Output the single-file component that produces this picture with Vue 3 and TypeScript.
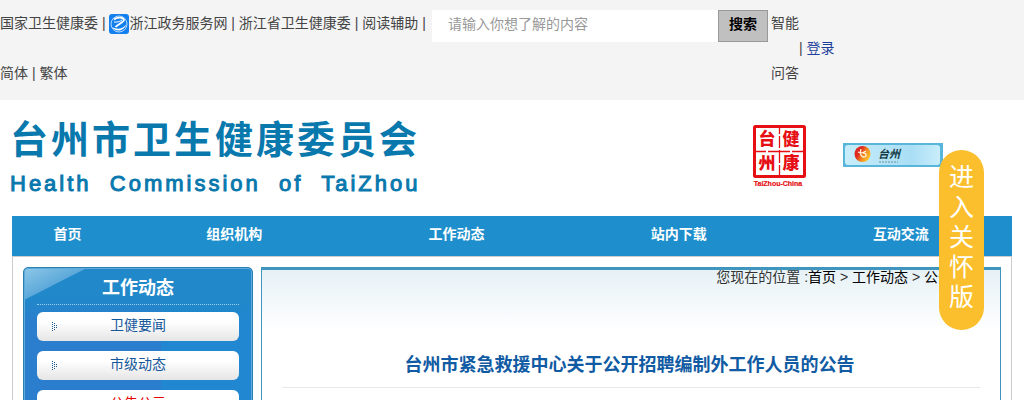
<script setup lang="ts">
import { ref } from 'vue'

interface NavItem {
  label: string
  active?: boolean
}

const keyword = ref('')

const navItems: NavItem[] = [
  { label: '首页' },
  { label: '组织机构' },
  { label: '工作动态' },
  { label: '站内下载' },
  { label: '互动交流' },
]

const sideItems: NavItem[] = [
  { label: '卫健要闻' },
  { label: '市级动态' },
  { label: '公告公示', active: true },
]

const arrowDots: [number, number][] = [
  [0, 0], [0, 2], [0, 4], [0, 6], [0, 8],
  [2, 1], [2, 3], [2, 5], [2, 7],
  [4, 3], [4, 5],
]
</script>

<template>
  <div class="page">
    <div class="topbar">
      <div class="top-links">
        <a href="#">国家卫生健康委</a> | <a href="#"><svg class="zj-icon" viewBox="0 0 20 20" aria-hidden="true">
          <rect width="20" height="20" rx="3" fill="#1480ee" />
          <circle cx="10" cy="10" r="8" fill="none" stroke="#b5d8fb" stroke-width="1" />
          <path d="M5 5.500C8 3 14 3 15 6C15 8 9 10 6.500 13" fill="none" stroke="#fff" stroke-width="1.800" />
          <path d="M3 13C6 18 14 18 17.500 10.500C13.500 15 8 16 3 13Z" fill="#fff" />
          <path d="M5 8C8 8.500 11 7.500 13 6" fill="none" stroke="#fff" stroke-width="1" />
        </svg>浙江政务服务网</a> | <a href="#">浙江省卫生健康委</a> | <a href="#">阅读辅助</a> | <a href="#">简体</a> | <a href="#">繁体</a>
      </div>
      <form class="search" @submit.prevent>
        <input v-model="keyword" type="text" aria-label="搜索内容" placeholder="请输入你想了解的内容">
        <button type="submit">搜索</button>
      </form>
      <a class="qa" href="#">智能问答</a>
      <div class="login">| <a href="#">登录</a></div>
    </div>

    <header class="banner">
      <div class="brand">
        <h1>台州市卫生健康委员会</h1>
        <p>Health&nbsp; Commission&nbsp; of&nbsp; TaiZhou</p>
      </div>
      <svg class="seal" viewBox="0 0 56 66" role="img" aria-label="健康台州">
        <g fill="none" stroke="#e60f14">
          <rect x="2.500" y="2.500" width="50" height="50" rx="1" stroke-width="3" />
          <path d="M27.500 3V10M27.500 12V24M27.500 26V39M27.500 41V52M3 27.500H14M16 27.500H38M40 27.500H52" stroke-width="1.300" />
        </g>
        <g class="seal-glyph">
          <text x="15" y="21">台</text>
          <text x="39" y="21">健</text>
          <text x="15" y="45">州</text>
          <text x="39" y="45">康</text>
        </g>
        <text class="seal-caption" x="26" y="62">TaiZhou-China</text>
      </svg>
      <a class="city" href="#" aria-label="台州">
        <svg viewBox="0 0 100 24" aria-hidden="true">
          <defs>
            <linearGradient id="plate" x1="0" x2="1">
              <stop offset="0" stop-color="#c8edfb" />
              <stop offset="0.700" stop-color="#a9def5" />
              <stop offset="1" stop-color="#c9edfb" />
            </linearGradient>
            <linearGradient id="ball" x1="0" y1="0.200" x2="1" y2="0.800">
              <stop offset="0.300" stop-color="#dd2921" />
              <stop offset="0.600" stop-color="#f58b20" />
              <stop offset="1" stop-color="#ffd12c" />
            </linearGradient>
          </defs>
          <rect width="100" height="24" fill="#57b6da" />
          <rect x="2" y="2" width="95" height="20" rx="3" fill="url(#plate)" />
          <circle cx="19.500" cy="11" r="8" fill="url(#ball)" />
          <path d="M18 6C17 9 17 14 21 14C24 14 24 10 20 10M15 9C18 10.500 21 9.500 23 8" fill="none" stroke="#fff3d5" stroke-width="1.300" />
          <text class="city-name" x="35" y="15">台州</text>
          <path d="M36 19H55" stroke="#6e929c" stroke-dasharray="2 1" />
        </svg>
      </a>
    </header>

    <nav class="nav" aria-label="主导航">
      <a v-for="item in navItems" :key="item.label" href="#">{{ item.label }}</a>
    </nav>

    <div class="content">
      <aside class="sidebar">
        <h2>工作动态</h2>
        <ul>
          <li v-for="item in sideItems" :key="item.label">
            <a href="#" :class="{ active: item.active }">
              <svg class="arrow" viewBox="0 0 6 9" aria-hidden="true">
                <rect v-for="([x, y], i) in arrowDots" :key="i" :x="x" :y="y" width="1" height="1" />
              </svg>
              {{ item.label }}
            </a>
          </li>
        </ul>
      </aside>

      <main class="main">
        <div class="crumbs">
          您现在的位置 :<a href="#">首页</a> &gt; <a href="#">工作动态</a> &gt; <a href="#">公告公示</a>
        </div>
        <h2>台州市紧急救援中心关于公开招聘编制外工作人员的公告</h2>
      </main>
    </div>

    <button class="care" type="button">进入关怀版</button>
  </div>
</template>

<style>
body {
  margin: 0;
}
</style>

<style scoped>
.page {
  display: flex;
  flex-direction: column;
  height: 100vh;
  overflow: hidden;
  background: #fff;
  color: #333;
  font: 14px/20px "Liberation Sans", "Noto Sans CJK SC", sans-serif;
}

.page * {
  box-sizing: border-box;
}

a {
  color: inherit;
  text-decoration: none;
}

.topbar {
  display: flex;
  flex: none;
  height: 100px;
  background: #f4f4f4;
  color: #444;
  line-height: 50px;
}

.top-links,
.qa {
  margin-top: -2px;
}

.top-links {
  width: 432px;
}

.zj-icon {
  width: 20px;
  height: 20px;
  vertical-align: middle;
}

.search {
  display: flex;
  height: 32px;
  margin-top: 10px;
}

.search input {
  width: 286px;
  padding: 0 16px 4px;
  border: 0;
  border-radius: 0;
  background: #fff;
  font: inherit;
  line-height: 28px;
}

.search input::placeholder {
  color: #999;
  opacity: 1;
}

.search button {
  width: 50px;
  padding: 0 0 4px;
  border: 1px solid #999;
  background: #c0c0c0;
  color: #000;
  font: bold 14px/26px "Liberation Sans", "Noto Sans CJK SC", sans-serif;
}

.qa {
  width: 28px;
  margin-left: 3px;
}

.login {
  line-height: 96px;
}

.login a {
  color: #1e409b;
}

.banner {
  display: flex;
  flex: none;
  align-items: flex-start;
  height: 116px;
  padding: 0 81px 0 10px;
}

.brand {
  flex: 1;
  color: #0878ad;
}

.brand h1 {
  margin: 16px 0 0;
  font-size: 38px;
  line-height: 48px;
  letter-spacing: 3px;
}

.brand p {
  margin: 8px 0 0;
  font-size: 22px;
  line-height: 24px;
  letter-spacing: 3px;
  -webkit-text-stroke: 1px #0878ad;
}

.seal {
  width: 56px;
  height: 66px;
  margin-top: 24px;
}

.seal-glyph {
  fill: #e60f14;
  font-size: 17px;
  font-weight: 900;
  text-anchor: middle;
}

.seal-caption {
  fill: #e60f14;
  stroke: #e60f14;
  stroke-width: 0.2;
  font-size: 7px;
  font-weight: bold;
  text-anchor: middle;
}

.city {
  width: 100px;
  margin: 43px 0 0 35px;
}

.city svg {
  display: block;
  width: 100px;
  height: 24px;
}

.city-name {
  fill: #153b45;
  font-size: 11px;
  font-style: italic;
  font-weight: bold;
}

.nav {
  display: grid;
  flex: none;
  grid-template-columns: 1fr 2fr 2fr 2fr 2fr;
  height: 40px;
  margin: 0 12px;
  background: #1e8fcc;
  color: #fff;
  font-weight: bold;
  line-height: 36px;
  text-align: center;
}

.content {
  display: flex;
  flex: 1;
  gap: 8px;
  min-height: 0;
  margin: 0 12px;
  padding: 10px 10px 0;
  border: 1px solid #ccc;
  border-bottom: 0;
}

.sidebar {
  flex: none;
  width: 230px;
  height: 400px;
  padding: 0 13px;
  border: 1px solid #2b7fae;
  border-radius: 5px;
  background:
    linear-gradient(153deg, #8ec8e8 0, #5da9da 28px, transparent 29px),
    linear-gradient(#2188ca 0, #2188ca 30px, transparent 55px),
    linear-gradient(90deg, #2b7ecd 0, #2b7ecd 60%, #2187d0 60%);
  box-shadow: inset 0 0 0 1px #5eacdc;
}

.sidebar h2 {
  height: 37px;
  margin: 0 0 7px;
  border-bottom: 1px dotted #9bd0eb;
  color: #fff;
  font-size: 18px;
  line-height: 40px;
  text-align: center;
}

.sidebar ul {
  display: grid;
  gap: 10px;
  margin: 0;
  padding: 0;
  list-style: none;
}

.sidebar li a {
  display: grid;
  grid-template-columns: 21px 1fr 21px;
  height: 29px;
  border-radius: 6px;
  background: linear-gradient(#fff 35%, #e5e5e5);
  color: #15589b;
  line-height: 26px;
  text-align: center;
}

.sidebar li .active {
  color: #e80000;
}

.arrow {
  width: 6px;
  height: 9px;
  margin-top: 10px;
  justify-self: end;
  fill: #15588f;
}

.main {
  flex: 1;
  min-width: 0;
  padding: 0 20px;
  border: 1px solid #3e96bf;
  border-top-width: 3px;
  border-bottom: 0;
  background: linear-gradient(#e6f1f6, #fff 60px);
}

.crumbs {
  line-height: 15px;
  text-align: right;
}

.crumbs a {
  color: #000;
}

.main h2 {
  margin: 62px 0 0;
  padding: 0 3px 4px 0;
  border-bottom: 1px solid #e8e8e8;
  color: #105ba3;
  font-size: 18px;
  line-height: 36px;
  text-align: center;
}

.care {
  position: fixed;
  top: 150px;
  right: 40px;
  width: 45px;
  height: 180px;
  padding: 0 10px 6px;
  border: 0;
  border-radius: 23px;
  background: #fbbf2d;
  color: #fff;
  font: 25px/30px "Liberation Sans", "Noto Sans CJK SC", sans-serif;
}
</style>
